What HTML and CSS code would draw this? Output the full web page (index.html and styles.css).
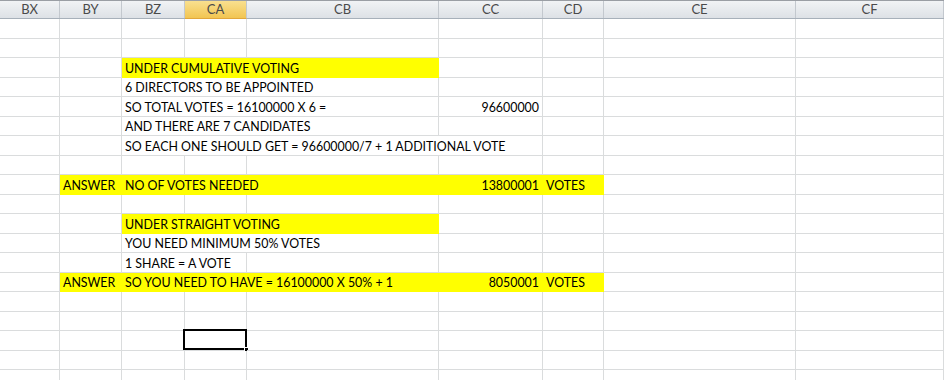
FILE: index.html
```html
<!DOCTYPE html>
<html>
<head>
<meta charset="utf-8">
<link rel="stylesheet" href="styles.css">
</head>
<body>
<div class="sheet">
  <div class="head">
    <div class="hc">BX</div><div class="hc">BY</div><div class="hc">BZ</div><div class="hc sel">CA</div><div class="hc">CB</div><div class="hc">CC</div><div class="hc">CD</div><div class="hc">CE</div><div class="hc">CF</div>
  </div>
  <div class="grid">
    <!-- r1 -->
    <div class="c"></div><div class="c"></div><div class="c"></div><div class="c"></div><div class="c"></div><div class="c"></div><div class="c"></div><div class="c"></div><div class="c"></div>
    <!-- r2 -->
    <div class="c"></div><div class="c"></div><div class="c"></div><div class="c"></div><div class="c"></div><div class="c"></div><div class="c"></div><div class="c"></div><div class="c"></div>
    <!-- r3 -->
    <div class="c"></div><div class="c"></div><div class="c y s3">UNDER CUMULATIVE VOTING</div><div class="c"></div><div class="c"></div><div class="c"></div><div class="c"></div>
    <!-- r4 -->
    <div class="c"></div><div class="c"></div><div class="c s3">6 DIRECTORS TO BE APPOINTED</div><div class="c"></div><div class="c"></div><div class="c"></div><div class="c"></div>
    <!-- r5 -->
    <div class="c"></div><div class="c"></div><div class="c s3">SO TOTAL VOTES = 16100000 X 6 =</div><div class="c num">96600000</div><div class="c"></div><div class="c"></div><div class="c"></div>
    <!-- r6 -->
    <div class="c"></div><div class="c"></div><div class="c s3">AND THERE ARE 7 CANDIDATES</div><div class="c"></div><div class="c"></div><div class="c"></div><div class="c"></div>
    <!-- r7 -->
    <div class="c"></div><div class="c"></div><div class="c s4">SO EACH ONE SHOULD GET = 96600000/7 + 1 ADDITIONAL VOTE</div><div class="c"></div><div class="c"></div><div class="c"></div>
    <!-- r8 -->
    <div class="c"></div><div class="c"></div><div class="c"></div><div class="c"></div><div class="c"></div><div class="c"></div><div class="c"></div><div class="c"></div><div class="c"></div>
    <!-- r9 -->
    <div class="c"></div><div class="c y">ANSWER</div><div class="c y s3">NO OF VOTES NEEDED</div><div class="c y num">13800001</div><div class="c y">VOTES</div><div class="c"></div><div class="c"></div>
    <!-- r10 -->
    <div class="c"></div><div class="c"></div><div class="c"></div><div class="c"></div><div class="c"></div><div class="c"></div><div class="c"></div><div class="c"></div><div class="c"></div>
    <!-- r11 -->
    <div class="c"></div><div class="c"></div><div class="c y s3">UNDER STRAIGHT VOTING</div><div class="c"></div><div class="c"></div><div class="c"></div><div class="c"></div>
    <!-- r12 -->
    <div class="c"></div><div class="c"></div><div class="c s3">YOU NEED MINIMUM 50% VOTES</div><div class="c"></div><div class="c"></div><div class="c"></div><div class="c"></div>
    <!-- r13 -->
    <div class="c"></div><div class="c"></div><div class="c s2">1 SHARE = A VOTE</div><div class="c"></div><div class="c"></div><div class="c"></div><div class="c"></div><div class="c"></div>
    <!-- r14 -->
    <div class="c"></div><div class="c y">ANSWER</div><div class="c y s3">SO YOU NEED TO HAVE = 16100000 X 50% + 1</div><div class="c y num">8050001</div><div class="c y">VOTES</div><div class="c"></div><div class="c"></div>
    <!-- r15 -->
    <div class="c"></div><div class="c"></div><div class="c"></div><div class="c"></div><div class="c"></div><div class="c"></div><div class="c"></div><div class="c"></div><div class="c"></div>
    <!-- r16 -->
    <div class="c"></div><div class="c"></div><div class="c"></div><div class="c"></div><div class="c"></div><div class="c"></div><div class="c"></div><div class="c"></div><div class="c"></div>
    <!-- r17 -->
    <div class="c"></div><div class="c"></div><div class="c"></div><div class="c active"><span class="selbox"><span class="handle"></span></span></div><div class="c"></div><div class="c"></div><div class="c"></div><div class="c"></div><div class="c"></div>
    <!-- r18 -->
    <div class="c"></div><div class="c"></div><div class="c"></div><div class="c"></div><div class="c"></div><div class="c"></div><div class="c"></div><div class="c"></div><div class="c"></div>
    <!-- r19 -->
    <div class="c"></div><div class="c"></div><div class="c"></div><div class="c"></div><div class="c"></div><div class="c"></div><div class="c"></div><div class="c"></div><div class="c"></div>
  </div>
</div>
</body>
</html>
```

FILE: styles.css
```css
html, body {
  margin: 0;
  padding: 0;
  background: #ffffff;
  overflow: hidden;
}

.sheet {
  width: 944px;
  height: 380px;
  overflow: hidden;
  font-family: Lato, "Open Sans", sans-serif;
  color: #000;
}

.head, .grid {
  display: grid;
  grid-template-columns: 60px 62px 63px 62px 192px 104px 61px 192px 148px;
}

.head {
  height: 19px;
  box-sizing: border-box;
  border-top: 1px solid #9a9ea4;
  border-bottom: 1px solid #a7b0ba;
  background: linear-gradient(#f1f3f5, #dde1e6);
}

.hc {
  box-sizing: border-box;
  border-right: 1px solid #c3c8ce;
  font-size: 13px;
  line-height: 17px;
  text-align: center;
  color: #4a4a4a;
}

.hc.sel {
  background: linear-gradient(#f9e08f, #f2c552);
  border-bottom: 1px solid #e2a73b;
  margin-bottom: -1px;
}

.grid {
  grid-auto-rows: 19.5px;
}

.c {
  box-sizing: border-box;
  border-right: 1px solid #dadcdd;
  border-bottom: 1px solid #dadcdd;
  font-size: 12.4px;
  line-height: 15px;
  padding: 0 3px 1px 3px;
  display: flex;
  align-items: flex-end;
  white-space: nowrap;
  position: relative;
}

.c.s2 { grid-column: span 2; }
.c.s3 { grid-column: span 3; }
.c.s4 { grid-column: span 4; }

.c.y {
  background: #ffff00;
  border-color: #ffff00;
}

.c.num {
  justify-content: flex-end;
}

.selbox {
  position: absolute;
  left: -2px;
  top: -2px;
  width: 64px;
  height: 21px;
  box-sizing: border-box;
  border: 2px solid #000;
}

.handle {
  position: absolute;
  right: -4px;
  bottom: -4px;
  width: 5px;
  height: 5px;
  background: #000;
  border: 1px solid #fff;
  box-sizing: border-box;
}
```
